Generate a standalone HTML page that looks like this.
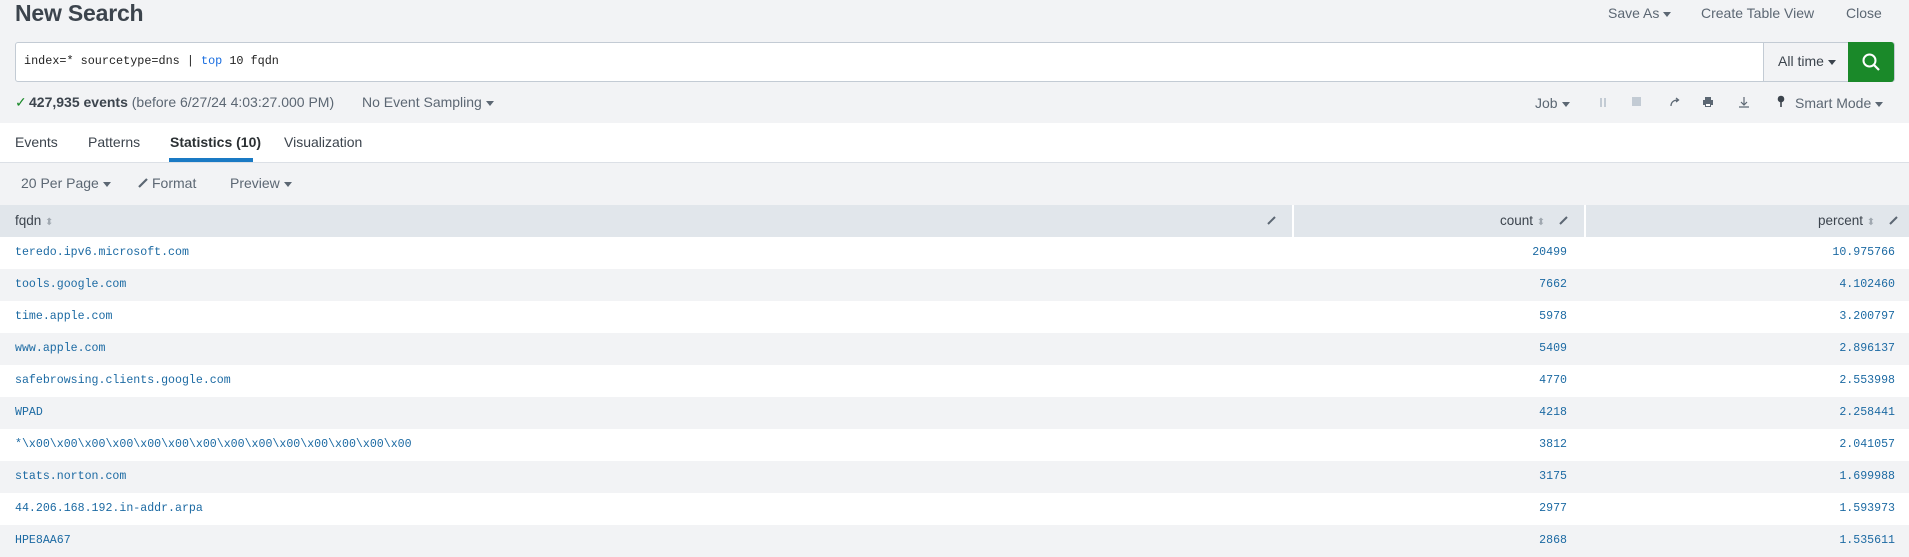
<!DOCTYPE html>
<html><head><meta charset="utf-8"><style>
*{margin:0;padding:0;box-sizing:border-box}
body{width:1909px;height:557px;overflow:hidden;background:#f2f3f5;font-family:"Liberation Sans",sans-serif;color:#3c444d;font-size:14px;position:relative}
.a{position:absolute;white-space:nowrap}
.caret{display:inline-block;width:0;height:0;border-left:4px solid transparent;border-right:4px solid transparent;border-top:5px solid #3c444d;vertical-align:middle;margin-left:4px}
.mono{font-family:"Liberation Mono",monospace;font-size:11.6px;color:#1c6aa3}
.row{position:absolute;left:0;width:1909px;height:32px}
.row span{position:absolute;top:9px}
</style></head><body>
<div class="a" style="left:15px;top:0px;font-size:23px;font-weight:bold;color:#3c444d;letter-spacing:-0.2px">New Search</div>
<div class="a" style="left:1608px;top:5px;color:#5c6773">Save As<span class="caret" style="border-top-color:#5c6773"></span></div>
<div class="a" style="left:1701px;top:5px;color:#5c6773">Create Table View</div>
<div class="a" style="left:1846px;top:5px;color:#5c6773">Close</div>

<div class="a" style="left:15px;top:42px;width:1880px;height:40px;background:#fff;border:1px solid #c3cbd4;border-radius:3px"></div>
<div class="a mono" style="left:24px;top:54px;color:#222;font-size:11.8px">index=* sourcetype=dns | <span style="color:#1a6ee0">top</span> 10 fqdn</div>
<div class="a" style="left:1763px;top:43px;width:86px;height:38px;background:#f2f3f5;border-left:1px solid #c3cbd4"></div>
<div class="a" style="left:1778px;top:53px;color:#3c444d">All time<span class="caret"></span></div>
<div class="a" style="left:1848px;top:42px;width:46px;height:40px;background:#1a8929;border-radius:0 3px 3px 0"></div>
<svg class="a" style="left:1861px;top:52px" width="20" height="20" viewBox="0 0 20 20"><circle cx="8.5" cy="8.5" r="6" fill="none" stroke="#fff" stroke-width="2"/><path d="M13 13l5 5" stroke="#fff" stroke-width="2.2"/></svg>

<div class="a" style="left:15px;top:94px;color:#1a8929">✓</div>
<div class="a" style="left:29px;top:94px;color:#5c6773"><b style="color:#3c444d">427,935 events</b> (before 6/27/24 4:03:27.000 PM)</div>
<div class="a" style="left:362px;top:94px;color:#5c6773">No Event Sampling<span class="caret" style="border-top-color:#5c6773"></span></div>

<div class="a" style="left:1535px;top:95px;color:#5c6773">Job<span class="caret" style="border-top-color:#5c6773"></span></div>
<div class="a" style="left:1600px;top:98px;width:2px;height:9px;background:#c3cbd4"></div>
<div class="a" style="left:1604px;top:98px;width:2px;height:9px;background:#c3cbd4"></div>
<div class="a" style="left:1632px;top:97px;width:9px;height:9px;background:#c3cbd4"></div>
<svg class="a" style="left:1669px;top:96px" width="12" height="12" viewBox="0 0 12 12"><path d="M2 10C2 6 5 4 9 4M7 2l2.5 2L7 6" fill="none" stroke="#5c6773" stroke-width="1.3"/></svg>
<svg class="a" style="left:1702px;top:96px" width="12" height="12" viewBox="0 0 12 12"><rect x="3" y="1" width="6" height="3" fill="#5c6773"/><rect x="1" y="4" width="10" height="5" fill="#5c6773"/><rect x="3" y="8" width="6" height="3" fill="#5c6773"/><rect x="4" y="8" width="4" height="2" fill="#fff"/></svg>
<svg class="a" style="left:1738px;top:96px" width="12" height="12" viewBox="0 0 12 12"><path d="M6 1v8M3 6l3 3 3-3M1 11h10" fill="none" stroke="#5c6773" stroke-width="1.2"/></svg>
<svg class="a" style="left:1777px;top:95px" width="8" height="13" viewBox="0 0 8 13"><circle cx="4" cy="4" r="3.3" fill="#3c444d"/><rect x="3.2" y="6" width="1.6" height="6" fill="#3c444d"/></svg>
<div class="a" style="left:1795px;top:95px;color:#5c6773">Smart Mode<span class="caret" style="border-top-color:#5c6773"></span></div>

<div class="a" style="left:0;top:123px;width:1909px;height:40px;background:#fff;border-bottom:1px solid #dce0e6"></div>
<div class="a" style="left:15px;top:134px">Events</div>
<div class="a" style="left:88px;top:134px">Patterns</div>
<div class="a" style="left:170px;top:134px;font-weight:bold;color:#2b3033">Statistics (10)</div>
<div class="a" style="left:169px;top:158px;width:84px;height:4px;background:#1a7ac4"></div>
<div class="a" style="left:284px;top:134px">Visualization</div>

<div class="a" style="left:21px;top:175px;color:#5c6773">20 Per Page<span class="caret" style="border-top-color:#5c6773"></span></div>
<svg class="a" style="left:138px;top:177px" width="11" height="11" viewBox="0 0 11 11"><path d="M1 10L9 2" stroke="#5c6773" stroke-width="2.2"/></svg>
<div class="a" style="left:152px;top:175px;color:#5c6773">Format</div>
<div class="a" style="left:230px;top:175px;color:#5c6773">Preview<span class="caret" style="border-top-color:#5c6773"></span></div>

<div class="a" style="left:0;top:205px;width:1909px;height:32px;background:#e1e6eb"></div>
<div class="a" style="left:1292px;top:205px;width:2px;height:32px;background:#fff"></div>
<div class="a" style="left:1584px;top:205px;width:2px;height:32px;background:#fff"></div>
<div class="a" style="left:15px;top:213px;font-size:13.5px">fqdn <span style="color:#a0a8b0;font-size:10px">⬍</span></div>
<div class="a" style="left:1500px;top:213px;font-size:13.5px">count <span style="color:#a0a8b0;font-size:10px">⬍</span></div>
<div class="a" style="left:1818px;top:213px;font-size:13.5px">percent <span style="color:#a0a8b0;font-size:10px">⬍</span></div>
<svg class="a" style="left:1267px;top:215px" width="10" height="10"><path d="M1 9L8 2" stroke="#5c6773" stroke-width="2"/></svg>
<svg class="a" style="left:1559px;top:215px" width="10" height="10"><path d="M1 9L8 2" stroke="#5c6773" stroke-width="2"/></svg>
<svg class="a" style="left:1889px;top:215px" width="10" height="10"><path d="M1 9L8 2" stroke="#5c6773" stroke-width="2"/></svg>

<div class="row mono" style="top:237px;background:#fff"><span style="left:15px">teredo.ipv6.microsoft.com</span><span style="right:342px">20499</span><span style="right:14px">10.975766</span></div>
<div class="row mono" style="top:269px;background:#f2f3f5"><span style="left:15px">tools.google.com</span><span style="right:342px">7662</span><span style="right:14px">4.102460</span></div>
<div class="row mono" style="top:301px;background:#fff"><span style="left:15px">time.apple.com</span><span style="right:342px">5978</span><span style="right:14px">3.200797</span></div>
<div class="row mono" style="top:333px;background:#f2f3f5"><span style="left:15px">www.apple.com</span><span style="right:342px">5409</span><span style="right:14px">2.896137</span></div>
<div class="row mono" style="top:365px;background:#fff"><span style="left:15px">safebrowsing.clients.google.com</span><span style="right:342px">4770</span><span style="right:14px">2.553998</span></div>
<div class="row mono" style="top:397px;background:#f2f3f5"><span style="left:15px">WPAD</span><span style="right:342px">4218</span><span style="right:14px">2.258441</span></div>
<div class="row mono" style="top:429px;background:#fff"><span style="left:15px">*\x00\x00\x00\x00\x00\x00\x00\x00\x00\x00\x00\x00\x00\x00</span><span style="right:342px">3812</span><span style="right:14px">2.041057</span></div>
<div class="row mono" style="top:461px;background:#f2f3f5"><span style="left:15px">stats.norton.com</span><span style="right:342px">3175</span><span style="right:14px">1.699988</span></div>
<div class="row mono" style="top:493px;background:#fff"><span style="left:15px">44.206.168.192.in-addr.arpa</span><span style="right:342px">2977</span><span style="right:14px">1.593973</span></div>
<div class="row mono" style="top:525px;background:#f2f3f5"><span style="left:15px">HPE8AA67</span><span style="right:342px">2868</span><span style="right:14px">1.535611</span></div>
</body></html>
